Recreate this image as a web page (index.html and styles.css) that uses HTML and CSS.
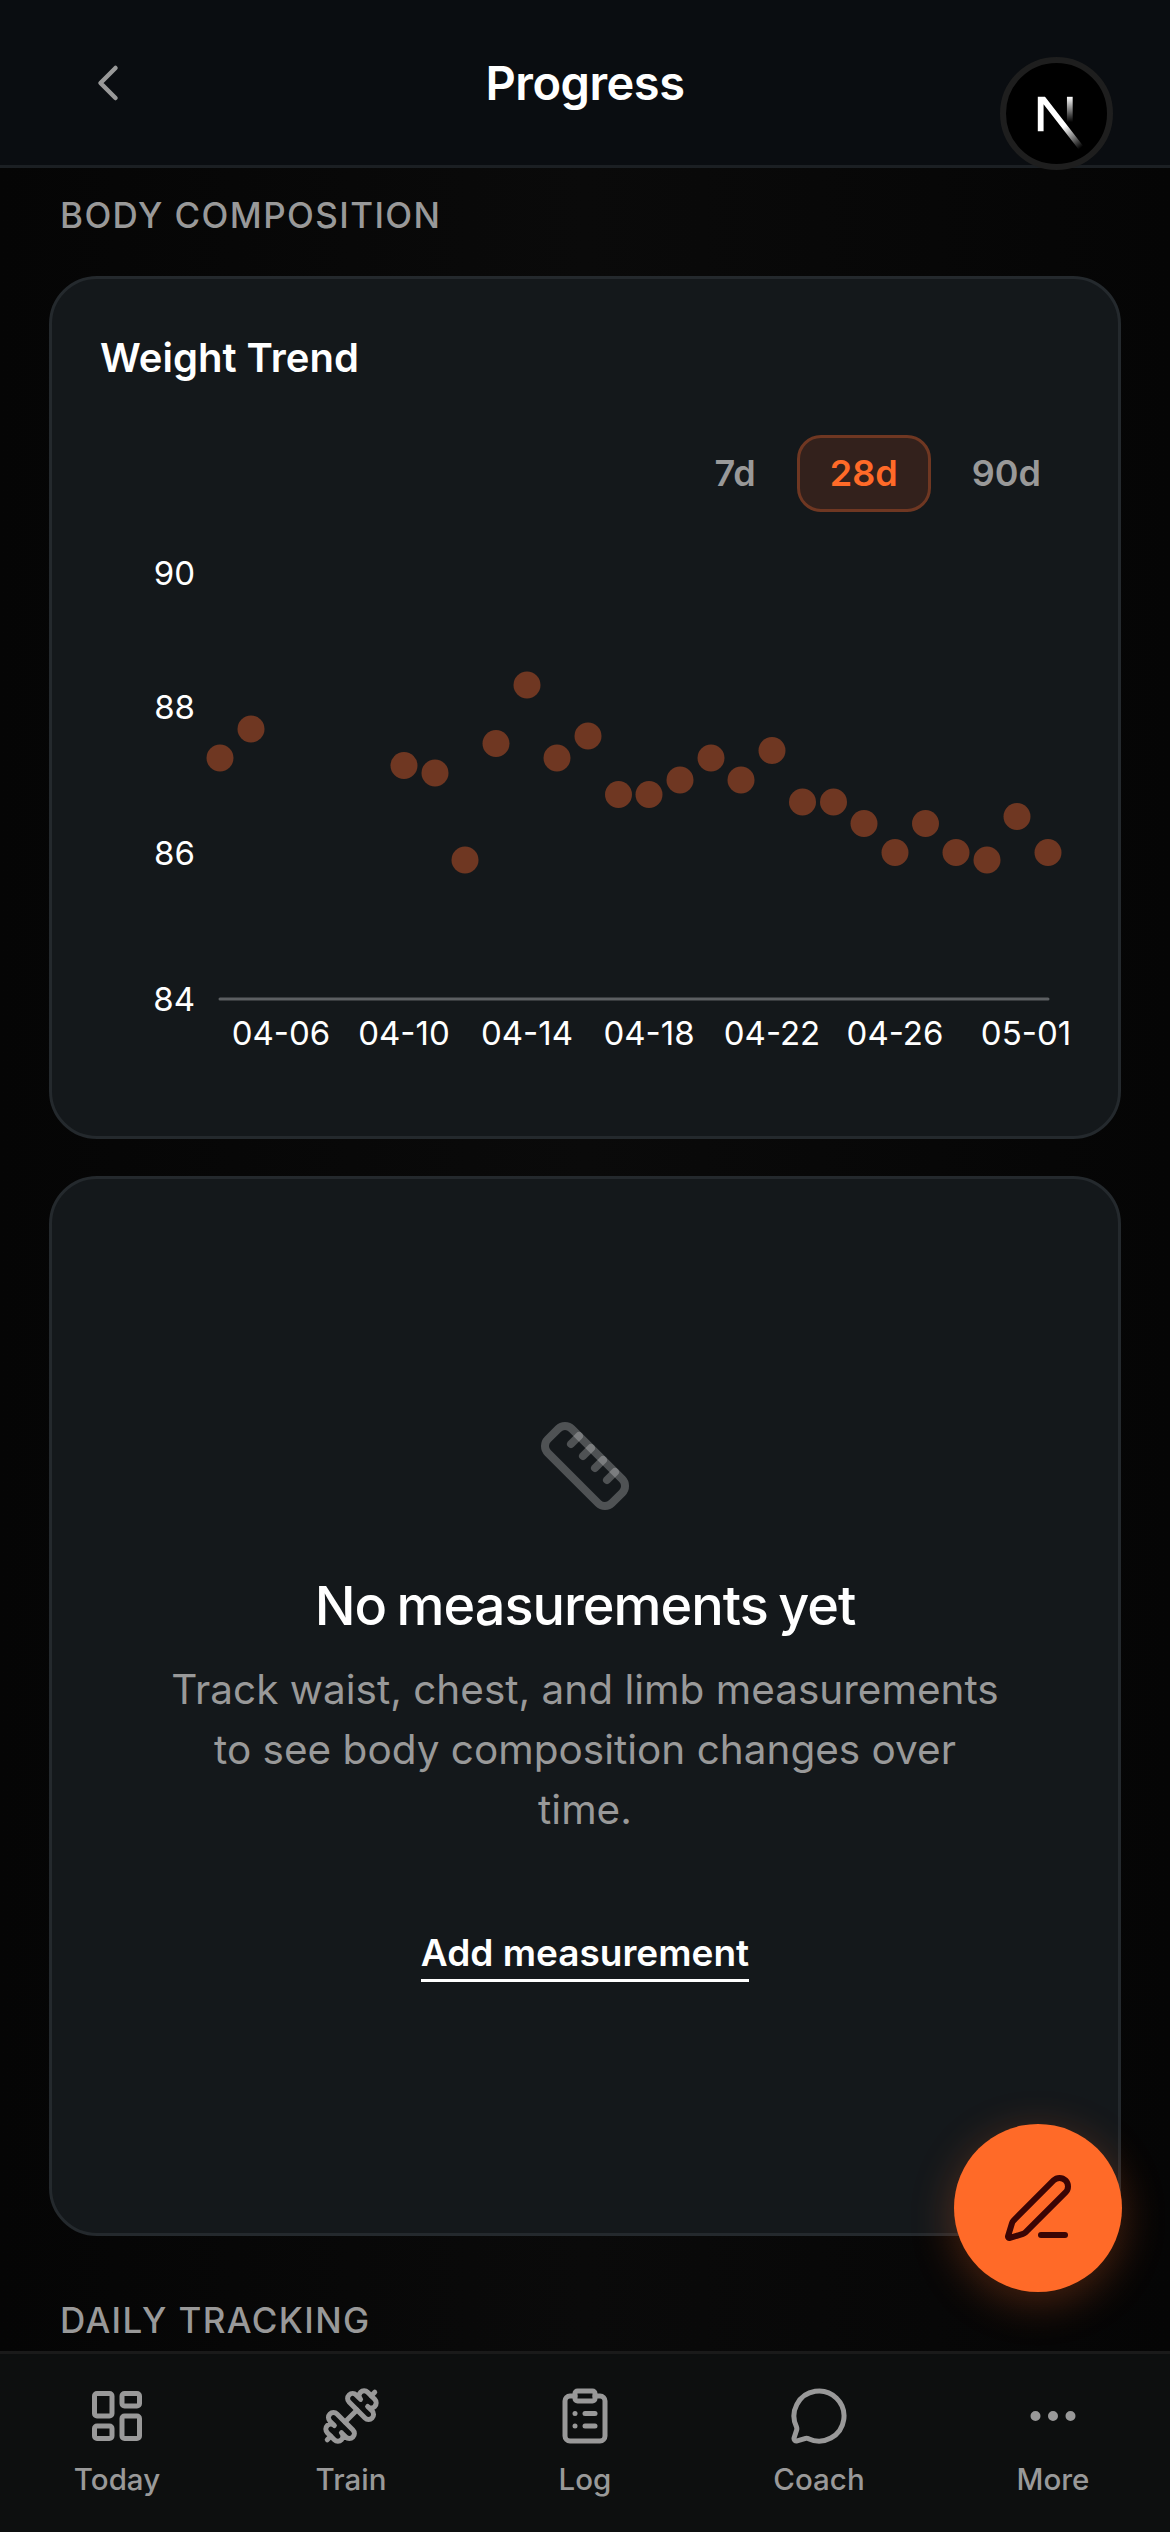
FILE: index.html
```html
<!DOCTYPE html>
<html lang="en">
<head>
    <meta charset="UTF-8">
    <meta name="viewport" content="width=device-width, initial-scale=1.0">
    <title>Progress</title>
    <link rel="stylesheet" href="styles.css">
</head>
<body>
    <div class="app">
        <header class="top-bar">
            <svg class="back-icon" viewBox="0 0 24 24"><path d="m15 18-6-6 6-6"/></svg>
            <h1>Progress</h1>
        </header>

        <div class="avatar">
            <svg class="next-logo" viewBox="0 0 180 180" fill="none">
                <defs>
                    <linearGradient id="n-diag" gradientUnits="userSpaceOnUse" x1="109" y1="116.5" x2="144.5" y2="160.5">
                        <stop stop-color="#fff"/>
                        <stop offset="1" stop-color="#fff" stop-opacity="0"/>
                    </linearGradient>
                    <linearGradient id="n-bar" gradientUnits="userSpaceOnUse" x1="121" y1="54" x2="120.8" y2="106.9">
                        <stop stop-color="#fff"/>
                        <stop offset="1" stop-color="#fff" stop-opacity="0"/>
                    </linearGradient>
                </defs>
                <path d="M149.5 157.5L69.1 54H54V126H66.1V69.4L140 164.8C143.3 162.6 146.5 160.2 149.5 157.5Z" fill="url(#n-diag)"/>
                <rect x="115" y="54" width="12" height="72" fill="url(#n-bar)"/>
            </svg>
        </div>

        <main class="content">
            <h2 class="section-title">BODY COMPOSITION</h2>

            <section class="card trend-card">
                <h3>Weight Trend</h3>
                <div class="ranges">
                    <span class="range">7d</span>
                    <span class="range active">28d</span>
                    <span class="range">90d</span>
                </div>
                <svg class="chart" viewBox="51 520 1067 616">
                    <g class="y-labels">
                        <text x="194" y="585">90</text>
                        <text x="194" y="719">88</text>
                        <text x="194" y="865">86</text>
                        <text x="194" y="1011">84</text>
                    </g>
                    <line class="axis" x1="219" y1="999" x2="1047" y2="999"/>
                    <g class="dots">
                        <circle cx="219" cy="758" r="13.5"/>
                        <circle cx="250" cy="729" r="13.5"/>
                        <circle cx="403" cy="765.5" r="13.5"/>
                        <circle cx="434" cy="773" r="13.5"/>
                        <circle cx="464" cy="860" r="13.5"/>
                        <circle cx="495" cy="743.5" r="13.5"/>
                        <circle cx="526" cy="685" r="13.5"/>
                        <circle cx="556" cy="758" r="13.5"/>
                        <circle cx="587" cy="736" r="13.5"/>
                        <circle cx="617.5" cy="794.5" r="13.5"/>
                        <circle cx="648" cy="794.5" r="13.5"/>
                        <circle cx="679" cy="780" r="13.5"/>
                        <circle cx="710" cy="758" r="13.5"/>
                        <circle cx="740" cy="780" r="13.5"/>
                        <circle cx="771" cy="750.5" r="13.5"/>
                        <circle cx="801.5" cy="802" r="13.5"/>
                        <circle cx="832.5" cy="802" r="13.5"/>
                        <circle cx="863" cy="823.5" r="13.5"/>
                        <circle cx="894" cy="852.5" r="13.5"/>
                        <circle cx="924.5" cy="823.5" r="13.5"/>
                        <circle cx="955" cy="852.5" r="13.5"/>
                        <circle cx="986" cy="860" r="13.5"/>
                        <circle cx="1016" cy="816.5" r="13.5"/>
                        <circle cx="1047" cy="852.5" r="13.5"/>
                    </g>
                    <g class="x-labels">
                        <text x="280" y="1045">04-06</text>
                        <text x="403" y="1045">04-10</text>
                        <text x="526" y="1045">04-14</text>
                        <text x="648" y="1045">04-18</text>
                        <text x="771" y="1045">04-22</text>
                        <text x="894" y="1045">04-26</text>
                        <text x="1025" y="1045">05-01</text>
                    </g>
                </svg>
            </section>

            <section class="card empty-card">
                <svg class="ruler-icon" viewBox="0 0 24 24">
                    <path d="M21.3 15.3a2.4 2.4 0 0 1 0 3.4l-2.6 2.6a2.4 2.4 0 0 1-3.4 0L2.7 8.7a2.41 2.41 0 0 1 0-3.4l2.6-2.6a2.41 2.41 0 0 1 3.4 0Z"/>
                    <path d="m14.5 12.5 2-2"/>
                    <path d="m11.5 9.5 2-2"/>
                    <path d="m8.5 6.5 2-2"/>
                    <path d="m17.5 15.5 2-2"/>
                </svg>
                <h3>No measurements yet</h3>
                <p>Track waist, chest, and limb measurements to see body composition changes over time.</p>
                <a class="add-link">Add measurement</a>
            </section>

            <h2 class="section-title">DAILY TRACKING</h2>
        </main>

        <button class="fab">
            <svg viewBox="0 0 24 24">
                <path d="M13 21h8"/>
                <path d="M21.174 6.812a1 1 0 0 0-3.986-3.987L3.842 16.174a2 2 0 0 0-.5.83l-1.321 4.352a.5.5 0 0 0 .623.622l4.353-1.32a2 2 0 0 0 .83-.497z"/>
            </svg>
        </button>

        <nav class="tab-bar">
            <div class="tab">
                <svg viewBox="0 0 24 24">
                    <rect width="7" height="9" x="3" y="3" rx="1"/>
                    <rect width="7" height="5" x="14" y="3" rx="1"/>
                    <rect width="7" height="9" x="14" y="12" rx="1"/>
                    <rect width="7" height="5" x="3" y="16" rx="1"/>
                </svg>
                <span>Today</span>
            </div>
            <div class="tab">
                <svg viewBox="0 0 24 24">
                    <path d="M17.596 12.768a2 2 0 1 0 2.829-2.829l-1.768-1.767a2 2 0 0 0 2.828-2.829l-2.828-2.828a2 2 0 0 0-2.829 2.828l-1.767-1.768a2 2 0 1 0-2.829 2.829z"/>
                    <path d="m2.5 21.5 1.4-1.4"/>
                    <path d="m20.1 3.9 1.4-1.4"/>
                    <path d="M5.343 21.485a2 2 0 1 0 2.829-2.828l1.767 1.768a2 2 0 1 0 2.829-2.829l-6.364-6.364a2 2 0 1 0-2.829 2.829l1.768 1.767a2 2 0 0 0-2.828 2.829z"/>
                    <path d="m9.6 14.4 4.8-4.8"/>
                </svg>
                <span>Train</span>
            </div>
            <div class="tab">
                <svg viewBox="0 0 24 24">
                    <rect width="8" height="4" x="8" y="2" rx="1" ry="1"/>
                    <path d="M16 4h2a2 2 0 0 1 2 2v14a2 2 0 0 1-2 2H6a2 2 0 0 1-2-2V6a2 2 0 0 1 2-2h2"/>
                    <path d="M12 11h4"/>
                    <path d="M12 16h4"/>
                    <path d="M8 11h.01"/>
                    <path d="M8 16h.01"/>
                </svg>
                <span>Log</span>
            </div>
            <div class="tab">
                <svg viewBox="0 0 24 24">
                    <path d="M2.992 16.342a2 2 0 0 1 .094 1.167l-1.065 3.29a1 1 0 0 0 1.236 1.168l3.413-.998a2 2 0 0 1 1.099.092 10 10 0 1 0-4.777-4.719"/>
                </svg>
                <span>Coach</span>
            </div>
            <div class="tab">
                <svg viewBox="0 0 24 24">
                    <circle cx="12" cy="12" r="1"/>
                    <circle cx="19" cy="12" r="1"/>
                    <circle cx="5" cy="12" r="1"/>
                </svg>
                <span>More</span>
            </div>
        </nav>
    </div>
</body>
</html>
```

FILE: styles.css
```css
* {
    box-sizing: border-box;
}

body {
    margin: 0;
    background-color: #080808;
    font-family: Inter, "Noto Sans", sans-serif;
    color: #fff;
}

.app {
    position: relative;
    width: 1170px;
    height: 2532px;
    overflow: hidden;
    display: flex;
    flex-direction: column;
    background: linear-gradient(90deg, #050505 0, #0a0a0a 50%, #050505 100%);
}

svg {
    fill: none;
    stroke-linecap: round;
    stroke-linejoin: round;
}

/* header */
.top-bar {
    position: relative;
    flex: none;
    height: 168px;
    display: flex;
    align-items: center;
    justify-content: center;
    background-color: #0a0d11;
    border-bottom: 3px solid #1b1f23;
}

.top-bar h1 {
    margin: 0;
    font-size: 47px;
    font-weight: 600;
    letter-spacing: -0.5px;
}

.back-icon {
    position: absolute;
    left: 78px;
    top: 53px;
    width: 60px;
    height: 60px;
    stroke: #999;
    stroke-width: 1.8;
}

.avatar {
    position: absolute;
    left: 1000px;
    top: 57px;
    width: 113px;
    height: 113px;
    display: flex;
    align-items: center;
    justify-content: center;
    border: 6px solid #1e1e1e;
    border-radius: 50%;
    background-color: #000;
}

.next-logo {
    width: 86px;
    height: 86px;
    margin-right: 4px;
}

/* main column */
.content {
    flex: 1;
    min-height: 0;
    display: flex;
    flex-direction: column;
    padding: 0 49px;
}

.section-title {
    margin: 0;
    padding-left: 11px;
    font-size: 35px;
    font-weight: 500;
    letter-spacing: 1.4px;
    line-height: 41px;
    color: #999;
}

.content > .section-title:first-child {
    margin-top: 27px;
}

.card {
    flex: none;
    border: 3px solid #24292d;
    border-radius: 48px;
    background-color: #14181b;
}

.trend-card {
    height: 863px;
    margin-top: 40px;
    padding: 55px 0 0 48px;
    position: relative;
}

.trend-card h3 {
    margin: 0;
    font-size: 40px;
    font-weight: 600;
    line-height: 48px;
}

.ranges {
    display: flex;
    justify-content: flex-end;
    align-items: center;
    gap: 41px;
    margin: 53px 77px 0 0;
}

.range {
    font-size: 36px;
    font-weight: 600;
    line-height: 43px;
    color: #999;
}

.range.active {
    padding: 14px 30px;
    border: 3px solid #6f3722;
    border-radius: 24px;
    background-color: #33211c;
    color: #ff6a28;
}

.chart {
    position: absolute;
    left: 0;
    top: 241px;
    width: 1067px;
    height: 616px;
    font-family: Inter, "Noto Sans", sans-serif;
    font-size: 33px;
    fill: #fff;
}

.y-labels text {
    text-anchor: end;
}

.x-labels text {
    text-anchor: middle;
}

.axis {
    stroke: #5c5f62;
    stroke-width: 3;
}

.dots circle {
    fill: #6f3722;
}

.empty-card {
    height: 1060px;
    margin-top: 37px;
    display: flex;
    flex-direction: column;
    align-items: center;
    padding: 239px 80px 0;
    text-align: center;
}

.ruler-icon {
    width: 96px;
    height: 96px;
    stroke: #fff;
    stroke-opacity: 0.25;
    stroke-width: 2;
}

.empty-card h3 {
    margin: 58px 0 0;
    font-size: 54px;
    font-weight: 500;
    line-height: 68px;
    letter-spacing: -1px;
    word-spacing: -3px;
}

.empty-card p {
    width: 845px;
    margin: 20px 0 0;
    font-size: 40.5px;
    line-height: 60px;
    color: #999;
}

.add-link {
    margin-top: 90px;
    padding-bottom: 3px;
    border-bottom: 3px solid #fff;
    font-size: 37px;
    font-weight: 600;
    line-height: 46px;
}

.empty-card + .section-title {
    margin-top: 64px;
}

/* floating button */
.fab {
    position: absolute;
    left: 954px;
    top: 2124px;
    width: 168px;
    height: 168px;
    display: flex;
    align-items: center;
    justify-content: center;
    padding: 0;
    border: none;
    border-radius: 50%;
    background-color: #ff6a28;
    box-shadow: 0 10px 44px rgba(255, 106, 40, 0.28);
}

.fab svg {
    width: 72px;
    height: 72px;
    stroke: #3a0505;
    stroke-width: 2;
}

/* bottom tabs */
.tab-bar {
    position: absolute;
    left: 0;
    right: 0;
    top: 2351px;
    height: 181px;
    display: grid;
    grid-template-columns: repeat(5, 1fr);
    padding-top: 32px;
    background-color: #0d0f0f;
    border-top: 3px solid #1a1a1a;
}

.tab {
    display: flex;
    flex-direction: column;
    align-items: center;
    gap: 15px;
    color: #999;
    font-size: 29.5px;
    font-weight: 500;
    line-height: 36px;
}

.tab svg {
    width: 60px;
    height: 60px;
    stroke: #999;
    stroke-width: 2;
}
```
